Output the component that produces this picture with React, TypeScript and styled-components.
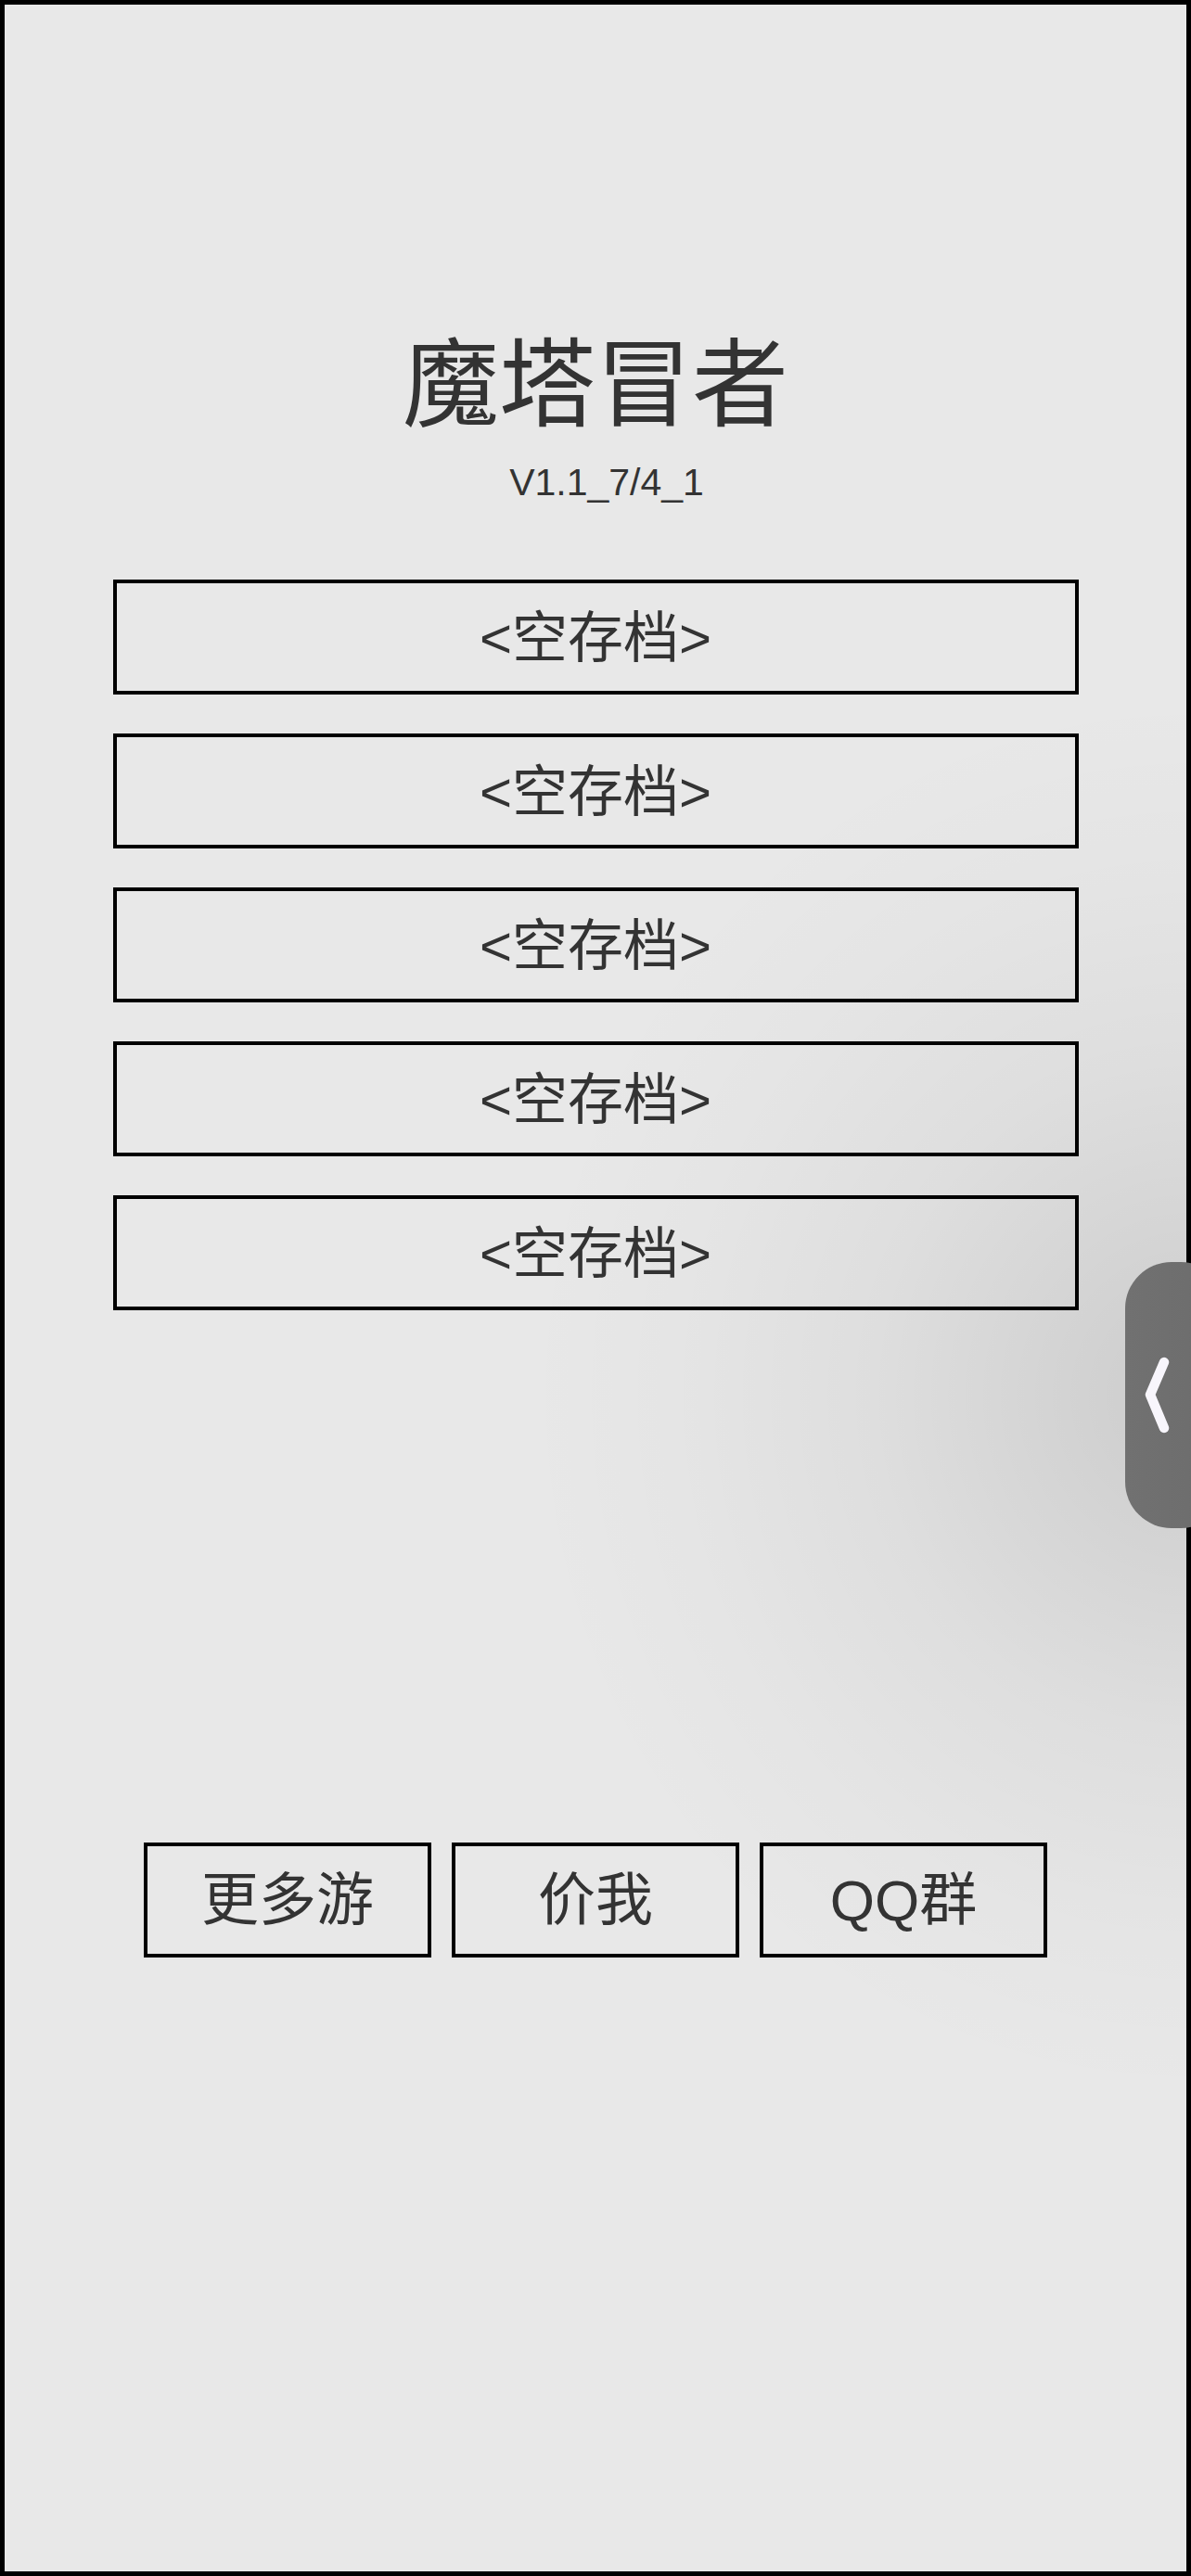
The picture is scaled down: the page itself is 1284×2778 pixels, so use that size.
import styled, { createGlobalStyle } from 'styled-components'

const GlobalStyle = createGlobalStyle`
  html, body {
    margin: 0;
    padding: 0;
    background: #e8e8e8;
    overflow: hidden;
  }
  * {
    box-sizing: border-box;
  }
`

const Screen = styled.div`
  position: relative;
  width: 1284px;
  height: 2778px;
  overflow: hidden;
  font-family: 'Liberation Sans', 'Noto Sans CJK SC', sans-serif;
  color: #333;
`

const Frame = styled.div`
  height: 100%;
  border: 5px solid #000;
  background:
    radial-gradient(
      ellipse 720px 760px at 1279px 1500px,
      rgba(0, 0, 0, 0.12) 0%,
      rgba(0, 0, 0, 0.085) 22%,
      rgba(0, 0, 0, 0.045) 48%,
      rgba(0, 0, 0, 0.015) 75%,
      rgba(0, 0, 0, 0) 100%
    ),
    #e8e8e8;
  display: flex;
  flex-direction: column;
  align-items: center;
  padding-top: 350px;
`

const Title = styled.h1`
  margin: 0;
  font-family: 'Noto Sans CJK SC', sans-serif;
  font-weight: 400;
  font-size: 104px;
  line-height: 1;
  color: #333;
`

const Version = styled.div`
  margin-top: 41px;
  margin-left: 24px;
  font-size: 41px;
  line-height: 1;
`

const SlotList = styled.div`
  margin-top: 84px;
  display: flex;
  flex-direction: column;
  gap: 42px;
`

const Slot = styled.button`
  width: 1041px;
  height: 124px;
  border: 4px solid #000;
  background: transparent;
  font-family: inherit;
  font-size: 60px;
  color: #333;
  display: flex;
  align-items: center;
  justify-content: center;
  padding: 0 0 10px;
`

const LinkRow = styled.div`
  margin-top: 574px;
  display: flex;
  gap: 22px;
`

const LinkButton = styled(Slot)`
  width: 310px;
  font-size: 62px;
`

const Handle = styled.div`
  position: absolute;
  left: 1213px;
  top: 1361px;
  width: 110px;
  height: 287px;
  border-radius: 50px;
  background: linear-gradient(90deg, #717171, #6c6c6c);
  display: flex;
  align-items: center;
`

const Chevron = styled.svg`
  width: 40px;
  height: 90px;
  margin-left: 17px;
`

const slots = [0, 1, 2, 3, 4]
const links = ['更多游', '价我', 'QQ群']

export default function App() {
  return (
    <>
      <GlobalStyle />
      <Screen>
        <Frame>
          <Title>魔塔冒者</Title>
          <Version>V1.1_7/4_1</Version>
          <SlotList>
            {slots.map((i) => (
              <Slot key={i}>&lt;空存档&gt;</Slot>
            ))}
          </SlotList>
          <LinkRow>
            {links.map((label) => (
              <LinkButton key={label}>{label}</LinkButton>
            ))}
          </LinkRow>
        </Frame>
        <Handle>
          <Chevron viewBox="0 0 40 90">
            <path
              d="M25 9 L10 44 L25 80"
              fill="none"
              stroke="#f8f6fc"
              strokeWidth="10.5"
              strokeLinecap="round"
              strokeLinejoin="round"
            />
          </Chevron>
        </Handle>
      </Screen>
    </>
  )
}
